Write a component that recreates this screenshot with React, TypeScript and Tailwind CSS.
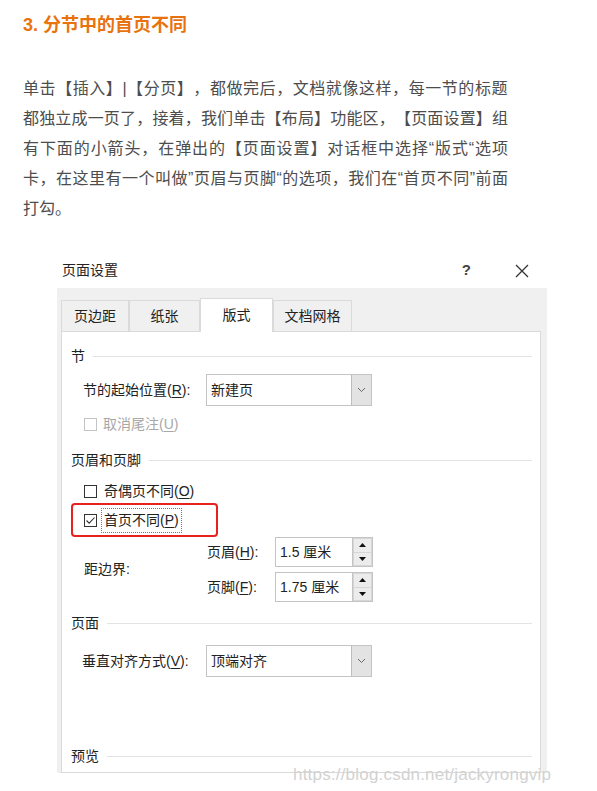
const cjk = "font-['Liberation_Sans','Noto_Sans_CJK_SC',sans-serif]";

const lines = [
  { t: '单击【插入】|【分页】，都做完后，文档就像这样，每一节的标题', ls: 'tracking-[0.5px]' },
  { t: '都独立成一页了，接着，我们单击【布局】功能区，【页面设置】组', ls: '' },
  { t: '有下面的小箭头，在弹出的【页面设置】对话框中选择“版式“选项', ls: '' },
  { t: '卡，在这里有一个叫做”页眉与页脚“的选项，我们在“首页不同”前面', ls: '' },
];

function Mn({ k }: { k: string }) {
  return (
    <>
      (<span className="underline underline-offset-2">{k}</span>)
    </>
  );
}

function Check({ checked, disabled }: { checked?: boolean; disabled?: boolean }) {
  return (
    <span
      className={
        'flex h-[13px] w-[13px] shrink-0 items-center justify-center border bg-white ' +
        (disabled ? 'border-[#c4c4c4]' : 'border-[#333]')
      }
    >
      {checked && (
        <svg width="11" height="11" viewBox="0 0 11 11">
          <path d="M1.5 5.5 L4.2 8.2 L9.5 2.5" fill="none" stroke="#333" strokeWidth="1.1" />
        </svg>
      )}
    </span>
  );
}

function Section({ title }: { title: string }) {
  return (
    <div className="flex h-[20px] items-center">
      <span>{title}</span>
      <span className="ml-[8px] h-px flex-1 bg-[#e3e3e3]" />
    </div>
  );
}

function Select({ value }: { value: string }) {
  return (
    <div className="flex h-[32px] w-[166px] border border-[#c4c4c4] bg-white">
      <span className="flex flex-1 items-center pl-[4px]">{value}</span>
      <span className="flex w-[20px] items-center justify-center border-l border-[#bdbdbd] bg-[#e3e3e3]">
        <svg width="9" height="6" viewBox="0 0 9 6">
          <path d="M1 1 L4.5 4.5 L8 1" fill="none" stroke="#666" strokeWidth="1" />
        </svg>
      </span>
    </div>
  );
}

function Spin({ value }: { value: string }) {
  return (
    <div className="flex h-[30px]">
      <span className="flex w-[78px] items-center border border-[#c4c4c4] bg-white pl-[4px]">{value}</span>
      <span className="flex w-[20px] flex-col gap-px border border-l-0 border-[#c4c4c4] bg-[#d6d6d6] p-px">
        <span className="flex flex-1 items-center justify-center bg-[#ececec]">
          <svg width="7" height="4" viewBox="0 0 7 4">
            <path d="M0 4 L3.5 0 L7 4 Z" fill="#111" />
          </svg>
        </span>
        <span className="flex flex-1 items-center justify-center bg-[#ececec]">
          <svg width="7" height="4" viewBox="0 0 7 4">
            <path d="M0 0 L3.5 4 L7 0 Z" fill="#111" />
          </svg>
        </span>
      </span>
    </div>
  );
}

function Tab({ label, active, w }: { label: string; active?: boolean; w: string }) {
  return (
    <div
      className={
        'flex items-center justify-center border border-b-0 border-[#dadada] ' +
        w +
        (active ? ' relative z-10 -mb-px h-[34px] bg-white' : ' h-[31px]')
      }
    >
      {label}
    </div>
  );
}

export default function App() {
  return (
    <div lang="zh-CN" className={'relative h-[791px] w-[597px] overflow-hidden bg-white ' + cjk}>
      <div className="px-[23px]">
        <h3 className="pt-[13px] text-[18px] font-bold leading-[24px] text-[#e8730e]">
          3. 分节中的首页不同
        </h3>
        <div className="mt-[37px] w-[485px] text-[16px] leading-[30px] text-[#4d4d4d] [text-spacing-trim:space-all]">
          {lines.map((l) => (
            <p key={l.t} className={'whitespace-nowrap text-justify [text-align-last:justify] ' + l.ls}>
              {l.t}
            </p>
          ))}
          <p>打勾。</p>
        </div>
      </div>

      <div className="ml-[57px] mt-[27px] w-[490px] text-[14px] text-[#222]">
        <div className="flex h-[37px] items-center pl-[5px] pr-[18px] pt-[2px]">
          <span>页面设置</span>
          <span className="ml-auto mr-[44px] text-[15px] font-bold text-[#444]">?</span>
          <svg width="14" height="14" viewBox="0 0 14 14">
            <path d="M1 1 L13 13 M13 1 L1 13" stroke="#333" strokeWidth="1.3" />
          </svg>
        </div>

        <div className="h-[485px] bg-[#f0f0f0] pl-[4px] pr-[6px] pt-[10px]">
          <div className="flex h-[33px] items-end">
            <Tab label="页边距" w="w-[68px]" />
            <Tab label="纸张" w="w-[71px]" />
            <Tab label="版式" w="w-[73px]" active />
            <Tab label="文档网格" w="w-[79px]" />
          </div>
          <div className="h-[442px] border border-[#dadada] bg-white pl-[9px] pr-[8px] pt-[14px]">
            <Section title="节" />
            <div className="mt-[8px] flex items-center pl-[12px]">
              <span className="w-[123px]">
                节的起始位置<Mn k="R" />:
              </span>
              <Select value="新建页" />
            </div>
            <div className="mt-[8px] flex h-[20px] items-center gap-[6px] pl-[13px] text-[#a8a8a8]">
              <Check disabled />
              <span>
                取消尾注<Mn k="U" />
              </span>
            </div>

            <div className="mt-[16px]">
              <Section title="页眉和页脚" />
            </div>
            <div className="mt-[11px] flex h-[20px] items-center gap-[7px] pl-[13px]">
              <Check />
              <span>
                奇偶页不同<Mn k="O" />
              </span>
            </div>
            <div className="mt-[2px] flex h-[34px] w-[147px] items-center rounded-[4px] border-2 border-[#e8201e] pl-[11px]">
              <Check checked />
              <span className="ml-[4px] flex h-[25px] items-center border border-dotted border-[#777] px-[2px]">
                首页不同<Mn k="P" />
              </span>
            </div>
            <div className="flex items-center">
              <span className="w-[136px] pl-[13px]">距边界:</span>
              <div className="flex flex-col gap-[5px]">
                <div className="flex items-center">
                  <span className="w-[68px]">
                    页眉<Mn k="H" />:
                  </span>
                  <Spin value="1.5 厘米" />
                </div>
                <div className="flex items-center">
                  <span className="w-[68px]">
                    页脚<Mn k="F" />:
                  </span>
                  <Spin value="1.75 厘米" />
                </div>
              </div>
            </div>

            <div className="mt-[11px]">
              <Section title="页面" />
            </div>
            <div className="mt-[12px] flex items-center pl-[11px]">
              <span className="w-[124px]">
                垂直对齐方式<Mn k="V" />:
              </span>
              <Select value="顶端对齐" />
            </div>

            <div className="mt-[69px]">
              <Section title="预览" />
            </div>
          </div>
        </div>
      </div>

      <span className="absolute left-[293px] top-[762px] font-['Liberation_Sans',sans-serif] text-[17px] tracking-[0.2px] text-[#d2d2d2]">
        https://blog.csdn.net/jackyrongvip
      </span>
    </div>
  );
}
